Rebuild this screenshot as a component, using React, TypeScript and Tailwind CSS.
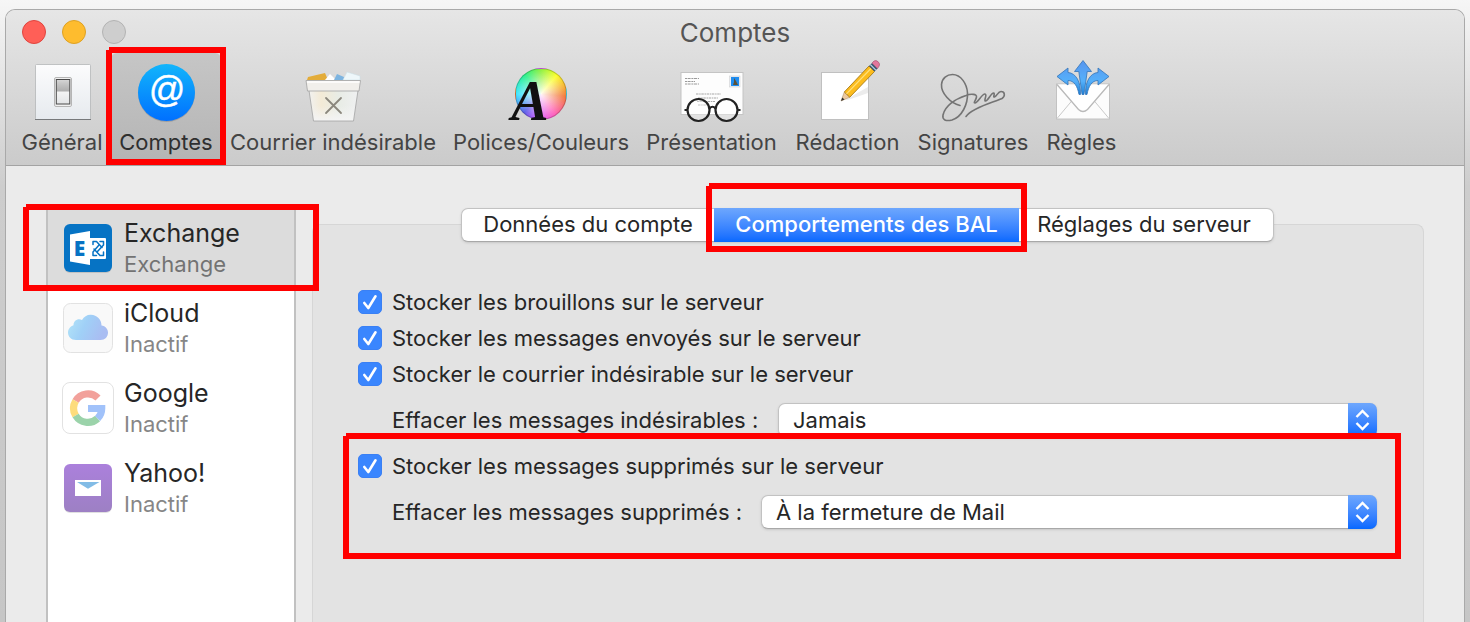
import { useState } from "react";
import type { ReactNode } from "react";

function Highlight({ className }: { className: string }) {
  return (
    <span
      aria-hidden="true"
      className={`pointer-events-none absolute z-10 border-[6px] border-[#ff0000] [clip-path:polygon(3px_0,100%_0,100%_100%,0_100%,0_3px,3px_3px)] ${className}`}
    />
  );
}

function GeneralIcon() {
  return (
    <svg viewBox="0 0 64 64" className="size-16">
      <defs>
        <linearGradient id="plate" x1="0" y1="0" x2="0" y2="1">
          <stop offset="0" stopColor="#fcfcfd" />
          <stop offset="1" stopColor="#e6eaee" />
        </linearGradient>
        <linearGradient id="rocker" x1="0" y1="0" x2="0" y2="1">
          <stop offset="0" stopColor="#d8d8d8" />
          <stop offset="0.15" stopColor="#c8c8c8" />
          <stop offset="0.48" stopColor="#adadad" />
          <stop offset="0.5" stopColor="#f4f4f4" />
          <stop offset="1" stopColor="#e2e4e6" />
        </linearGradient>
      </defs>
      <rect x="5.5" y="4.5" width="55" height="55" rx="1" fill="url(#plate)" stroke="#b4b6b8" strokeWidth="0.8" />
      <path d="M5 59.5h56" stroke="#77797b" strokeWidth="1.2" />
      <rect x="24.5" y="17.5" width="17" height="29" rx="1.5" fill="#f0f0f0" stroke="#b5b5b5" />
      <rect x="26.3" y="19.5" width="13.5" height="24.5" fill="url(#rocker)" stroke="#4a4a4a" strokeWidth="1" />
    </svg>
  );
}

function AccountsIcon() {
  return (
    <svg viewBox="0 0 64 64" className="size-16 overflow-visible">
      <defs>
        <linearGradient id="disc" x1="0" y1="0" x2="0" y2="1">
          <stop offset="0" stopColor="#12b5fb" />
          <stop offset="1" stopColor="#0070ff" />
        </linearGradient>
      </defs>
      <circle cx="32.5" cy="33.5" r="28.5" fill="#000000" opacity="0.15" />
      <circle cx="32.5" cy="32.5" r="28.5" fill="url(#disc)" />
      <text
        x="32.5"
        y="41.5"
        textAnchor="middle"
        fontFamily="Liberation Sans, sans-serif"
        fontStyle="italic"
        fontSize="36"
        fill="#ffffff"
        stroke="#ffffff"
        strokeWidth="0.4"
      >
        @
      </text>
    </svg>
  );
}

function JunkIcon() {
  return (
    <svg viewBox="0 0 64 64" className="size-16">
      <defs>
        <linearGradient id="bin" x1="0" y1="0" x2="1" y2="0">
          <stop offset="0" stopColor="#f1f1f0" />
          <stop offset="0.25" stopColor="#f3ead6" />
          <stop offset="0.6" stopColor="#e8ece5" />
          <stop offset="1" stopColor="#eff0f1" />
        </linearGradient>
        <linearGradient id="binfade" x1="0" y1="0" x2="0" y2="1">
          <stop offset="0.5" stopColor="#f4f4f4" stopOpacity="0" />
          <stop offset="1" stopColor="#f4f4f4" />
        </linearGradient>
      </defs>
      <path d="M6 20l1-3 17-4 3 7z" fill="#e3ac3a" />
      <path d="M24 20l5-6 6 6z" fill="#ffffff" />
      <path d="M33 20l3-6 7 3v3z" fill="#7db4e0" />
      <path d="M42 20l4-8 13 4v4z" fill="#eef7fa" stroke="#c9dfe6" strokeWidth="0.5" />
      <path d="M8 30.5L12.500 61h40L57 30.500z" fill="url(#bin)" />
      <path d="M8 30.5L12.500 61h40L57 30.500z" fill="url(#binfade)" stroke="#a2a2a2" strokeWidth="0.8" />
      <path d="M5 20.500h54.500l-1.500 10.500H6.500z" fill="#f1efeb" stroke="#a2a2a2" strokeWidth="0.8" />
      <path d="M6 22h52.500" stroke="#ffffff" strokeWidth="1.500" />
      <path d="M25 38l15 15M40 38L25 53" stroke="#8b877d" strokeWidth="1.800" strokeLinecap="round" />
    </svg>
  );
}

function FontsIcon() {
  return (
    <span className="relative block size-16">
      <span className="absolute top-2 left-1.5 size-[52px] rounded-full border border-black/20 bg-[radial-gradient(circle,#ffffffee_0%,#ffffff66_40%,#ffffff00_70%),conic-gradient(#8cf03c,#fbff2a_40deg,#f27a3c_95deg,#ff62b8_145deg,#dd60ff_185deg,#5f5fe8_222deg,#3fe6ff_270deg,#2df08a_320deg,#8cf03c)]" />
      <svg viewBox="0 0 64 64" className="absolute inset-0 size-16 overflow-visible">
        <text x="21" y="60" textAnchor="middle" fontFamily="Liberation Serif, serif" fontWeight="700" fontStyle="italic" fontSize="56" fill="#111111">
          A
        </text>
      </svg>
    </span>
  );
}

function ViewingIcon() {
  return (
    <svg viewBox="0 0 64 64" className="size-16">
      <rect x="1" y="12.500" width="62" height="42" fill="#fdfdfd" stroke="#c4c4c4" />
      <path d="M5 18.500h14M5 21.500h10M5 24h14" stroke="#9a9a9a" strokeWidth="1" strokeDasharray="2 .6 3 .8" />
      <path d="M16 34h25M18 38h20M17 41.500h18M18 45h9" stroke="#a8a8a8" strokeWidth="1.100" strokeDasharray="2.500 .7 1.500 .6" />
      <rect x="49.500" y="16" width="10.500" height="11" fill="#e9eef4" stroke="#cccccc" strokeWidth="0.500" />
      <rect x="51" y="17" width="8" height="9" fill="#1f8df0" />
      <path d="M54 18l2 3 2 4h-5l1-3z" fill="#5d5136" />
      <g fill="none" stroke="#222222" strokeWidth="2.200">
        <circle cx="18.500" cy="50" r="11" fill="#ffffff" fillOpacity="0.35" />
        <circle cx="46.500" cy="50" r="11" fill="#ffffff" fillOpacity="0.35" />
        <path d="M29.500 48.500q3-3.500 6 0M4.500 50h3M57.500 50h3" />
      </g>
    </svg>
  );
}

function ComposingIcon() {
  return (
    <svg viewBox="0 0 64 64" className="size-16 overflow-visible">
      <rect x="5.500" y="12.500" width="47" height="47" fill="#ffffff" stroke="#c0c0c0" />
      <path d="M29 40L52 27v6L32 40z" fill="#ececec" />
      <path d="M25 41l3.300-9 5.500 5.200z" fill="#ecc9a0" stroke="#a3855c" strokeWidth="0.500" />
      <path d="M25 41l1.300-3.600 2.200 2.100z" fill="#333333" />
      <path d="M28.300 32L53 6l5.500 5.500L33.800 37.200z" fill="#fcbc1d" stroke="#a77a16" strokeWidth="0.900" />
      <path d="M30.500 33.800L55 8.500" stroke="#ffe07a" strokeWidth="1.200" />
      <path d="M53 6l3-3 5.500 5.500-3 3z" fill="#3b5870" />
      <path d="M54.300 4.600l5.500 5.500" stroke="#b9d5e8" strokeWidth="1.200" />
      <path d="M56 3l2-2q2-1.300 4.200.8t1 4.200l-1.700 2.500z" fill="#e2779c" stroke="#a04c6c" strokeWidth="0.600" />
    </svg>
  );
}

function SignatureIcon() {
  return (
    <svg viewBox="0 0 64 64" className="size-16 overflow-visible">
      <path
        d="M19 45.500C9 43 0 33 .5 24.500C1 18 6 14.500 11.500 14.500C20 14.500 26 24 26.500 33C27 44 21 57 11 60C5 61.500 1 60 2 55C4 46 14 39 25 35.500C30 33.500 36 34 35.500 37C35 40 32 43 34 43C37 43 41 33.500 44 34C46.500 34.500 42.500 41 44.500 41C47 41 50 33 52.500 33C54.500 33 51.500 37.500 53.500 37C56 36 57 31.500 60 31.500C64 31.500 64.500 36 61 38.500C54 42 32 47 25 56.500"
        fill="none"
        stroke="#747474"
        strokeWidth="1.600"
        strokeLinecap="round"
        strokeLinejoin="round"
      />
    </svg>
  );
}

function RulesIcon() {
  return (
    <svg viewBox="0 0 64 64" className="size-16 overflow-visible">
      <defs>
        <linearGradient id="arrows" gradientUnits="userSpaceOnUse" x1="0" y1="0" x2="0" y2="35">
          <stop offset="0" stopColor="#5794ee" />
          <stop offset="0.600" stopColor="#55b0fa" />
          <stop offset="1" stopColor="#1c7fd6" />
        </linearGradient>
      </defs>
      <rect x="6.500" y="24" width="53" height="35" fill="#fcfcfc" stroke="#c2c2c2" />
      <path d="M7 58.500L22.500 40M59 58.500L43.500 40" stroke="#c9c9c9" fill="none" />
      <path d="M7 24.500L28.500 49.500q4.500 4 9 0L59 24.500" fill="#ffffff" stroke="#b9b9b9" strokeWidth="1.300" />
      <g fill="url(#arrows)" stroke="#3273b8" strokeWidth="0.800" strokeLinejoin="round">
        <path d="M33 .5l8.500 11H37.200L34 34.500h-2l-3.200-23h-4.300z" />
        <path d="M7 16.500L18 8v4.500C26 13 31 22 30.500 34.500h-1.500C27.500 26 24 20.500 18 20.500v4.500z" />
        <path d="M59 16.500L48 8v4.500C40 13 35 22 35.500 34.500h1.500C38.500 26 42 20.500 48 20.500v4.500z" />
      </g>
    </svg>
  );
}

type Tool = { label: string; icon: ReactNode; width: string; active?: boolean };

const tools: Tool[] = [
  { label: "Général", icon: <GeneralIcon />, width: "w-[98px]" },
  { label: "Comptes", icon: <AccountsIcon />, width: "w-[110px]", active: true },
  { label: "Courrier indésirable", icon: <JunkIcon />, width: "w-56" },
  { label: "Polices/Couleurs", icon: <FontsIcon />, width: "w-48" },
  { label: "Présentation", icon: <ViewingIcon />, width: "w-[149px]" },
  { label: "Rédaction", icon: <ComposingIcon />, width: "w-[123px]" },
  { label: "Signatures", icon: <SignatureIcon />, width: "w-32" },
  { label: "Règles", icon: <RulesIcon />, width: "w-[89px]" },
];

function ExchangeLogo() {
  return (
    <svg viewBox="0 0 52 52" className="size-[52px]">
      <rect x="2" y="3" width="48" height="48" rx="6" fill="#000000" opacity="0.12" />
      <rect x="2" y="2" width="48" height="48" rx="6" fill="#0673c4" />
      <rect x="27" y="16" width="17" height="21" rx="1" fill="#ffffff" />
      <g fill="none" stroke="#0673c4" strokeWidth="1.500" strokeLinecap="round" strokeLinejoin="round">
        <path d="M31 22.500v-3h3.500l5.500 6" />
        <path d="M38 19.500h3.500v3.500l-6 6.500" />
        <path d="M41.500 30v3.500H38L32 27" />
        <path d="M34.500 33.500H31V30l6-7" />
      </g>
      <path d="M8 12.500L28 9v34L8 39.500z" fill="#ffffff" />
      <text x="17.500" y="33.500" textAnchor="middle" fontFamily="Open Sans, sans-serif" fontWeight="800" fontSize="21" fill="#0673c4">
        E
      </text>
    </svg>
  );
}

function ICloudLogo() {
  return (
    <svg viewBox="0 0 52 52" className="size-[52px]">
      <defs>
        <linearGradient id="cloud" x1="0" y1="0" x2="1" y2="0.300">
          <stop offset="0" stopColor="#b4e6f8" />
          <stop offset="0.500" stopColor="#a0d0f7" />
          <stop offset="1" stopColor="#a9bdf2" />
        </linearGradient>
      </defs>
      <rect x="1.500" y="1.500" width="49" height="49" rx="7" fill="#f9f9f9" stroke="#e2e2e2" />
      <path d="M14 38C9 38 6 34.500 6 30.500C6 27 8.500 24 11.500 23.200C11.500 18.500 16 16 20 18C22 14.500 25.500 12.500 29 12.800C35 13 39.500 17.500 39.500 23.500C43.500 24 46 27 46 30.500C46 35 43 38 38.500 38z" fill="url(#cloud)" />
    </svg>
  );
}

function GoogleLogo() {
  return (
    <svg viewBox="0 0 52 52" className="size-[52px]">
      <rect x="0.500" y="0.500" width="51" height="51" rx="7.500" fill="#ffffff" stroke="#e2e2e2" />
      <g fill="none" strokeWidth="7.200">
        <path d="M36 16A14.300 14.300 0 0 0 13.600 19" stroke="#f2a19b" />
        <path d="M13.600 19a14.300 14.300 0 0 0 0 14.500" stroke="#fddc7c" />
        <path d="M13.600 33.500a14.300 14.300 0 0 0 22 3" stroke="#9bd3aa" />
        <path d="M35.600 36.500A14.300 14.300 0 0 0 39.700 26.500H26" stroke="#a1c2fa" />
      </g>
    </svg>
  );
}

function YahooLogo() {
  return (
    <svg viewBox="0 0 52 52" className="size-[52px]">
      <defs>
        <linearGradient id="violet" x1="0" y1="0" x2="0" y2="1">
          <stop offset="0" stopColor="#ab80dc" />
          <stop offset="1" stopColor="#9d80c4" />
        </linearGradient>
      </defs>
      <rect x="2" y="3" width="48" height="48" rx="6" fill="#000000" opacity="0.120" />
      <rect x="2" y="2" width="48" height="48" rx="6" fill="url(#violet)" />
      <rect x="13" y="18" width="26" height="16" fill="#ffffff" />
      <path d="M15 20h22.500L26 26.800z" fill="#82bce6" />
    </svg>
  );
}

const accounts = [
  { name: "Exchange", status: "Exchange", logo: <ExchangeLogo /> },
  { name: "iCloud", status: "Inactif", logo: <ICloudLogo /> },
  { name: "Google", status: "Inactif", logo: <GoogleLogo /> },
  { name: "Yahoo!", status: "Inactif", logo: <YahooLogo /> },
];

function CheckRow({ id, label }: { id: string; label: string }) {
  const [checked, setChecked] = useState(true);
  return (
    <div className="flex h-9 items-center gap-2.5">
      <span className="relative flex size-6">
        <input
          id={id}
          type="checkbox"
          checked={checked}
          onChange={(e) => setChecked(e.target.checked)}
          className="size-6 appearance-none rounded-[5px] border border-[#b8b8b8] bg-white checked:border-[#3a80f4] checked:bg-[#3a86fe]"
        />
        {checked && (
          <svg viewBox="0 0 24 24" className="pointer-events-none absolute inset-0 size-6">
            <path d="M6.300 13l4 5L17.500 6.300" fill="none" stroke="#ffffff" strokeWidth="2.600" strokeLinecap="round" strokeLinejoin="round" />
          </svg>
        )}
      </span>
      <label htmlFor={id}>{label}</label>
    </div>
  );
}

function SelectRow({ id, label, options, labelWidth }: { id: string; label: string; options: string[]; labelWidth: string }) {
  return (
    <div className="flex h-14 items-center pl-[34px]">
      <label htmlFor={id} className={`shrink-0 whitespace-nowrap ${labelWidth}`}>
        {label}
      </label>
      <span className="relative flex flex-1">
        <select
          id={id}
          className="h-[34px] w-full appearance-none rounded-[7px] border border-[#c2c2c2] border-b-[#a8a8a8] bg-white pl-3.5 text-[#262626] shadow-sm"
        >
          {options.map((o) => (
            <option key={o}>{o}</option>
          ))}
        </select>
        <span className="pointer-events-none absolute inset-y-0 right-0 w-[29px] rounded-r-[7px] bg-linear-to-b from-[#6ea7fd] to-[#0468ff]">
          <svg viewBox="0 0 29 34" className="h-[34px] w-[29px]">
            <path d="M8.500 14l6-6 6 6M8.500 20l6 6 6-6" fill="none" stroke="#ffffff" strokeWidth="2.400" />
          </svg>
        </span>
      </span>
    </div>
  );
}

export default function App() {
  return (
    <div className="flex min-h-screen flex-col bg-linear-to-b from-[#f6f6f6] via-[#cdcdcd] via-30% to-[#c6c6c6] pt-[9px] pr-[5px] pl-[5px] font-['Inter',sans-serif] text-[22px] leading-7 text-[#262626]">
      <div className="flex flex-1 flex-col overflow-hidden rounded-t-[10px] border border-b-0 border-[#a9a9a9] bg-[#ebebeb]">
        <header className="border-b border-[#a3a3a3] bg-linear-to-b from-[#e6e6e6] to-[#cbcbcb]">
          <div className="relative flex h-[43px] items-center justify-center">
            <div className="absolute inset-y-0 left-4 flex items-center gap-4">
              <button aria-label="Fermer" className="size-6 rounded-full border border-[#e0443e] bg-[#ff5f57]" />
              <button aria-label="Réduire" className="size-6 rounded-full border border-[#dea123] bg-[#febc2e]" />
              <button aria-label="Agrandir" className="size-6 rounded-full border border-[#b3b3b3] bg-[#cecece]" />
            </div>
            <h1 className="pt-0.5 text-[26px] leading-8 font-normal text-[#555555]">Comptes</h1>
          </div>
          <nav className="flex h-28 pl-[7px]">
            {tools.map((t) => (
              <div key={t.label} className={`relative flex shrink-0 ${t.width}`}>
                <button
                  className={`flex w-full flex-col items-center pt-[7px] whitespace-nowrap ${
                    t.active ? "rounded-t-md bg-linear-to-b from-[#c6c6c6] to-[#b4b4b4] text-[#2f2f2f]" : "text-[#444444]"
                  }`}
                >
                  {t.icon}
                  <span className="mt-1">{t.label}</span>
                </button>
                {t.active && <Highlight className="-inset-x-[5px] -top-1.5 bottom-0" />}
              </div>
            ))}
          </nav>
        </header>

        <main className="flex flex-1 pr-10 pl-10">
          <aside className="relative mt-[42px] w-[250px] shrink-0 border-x-2 border-[#c1c1c1] bg-white">
            <ul>
              {accounts.map((a, i) => (
                <li key={a.name}>
                  <button className={`flex h-20 w-full items-center gap-2.5 pl-3.5 text-left ${i === 0 ? "bg-[#dcdcdc]" : ""}`}>
                    {a.logo}
                    <span className="flex flex-col">
                      <span className="text-[25px] leading-8">{a.name}</span>
                      <span className={`leading-[30px] ${i === 0 ? "text-[#737373]" : "text-[#868686]"}`}>{a.status}</span>
                    </span>
                  </button>
                </li>
              ))}
            </ul>
            <Highlight className="-top-1 -right-[25px] -left-[25px] h-[87px]" />
          </aside>

          <section className="mt-[58px] ml-4 flex-1 rounded-t-lg border border-b-0 border-[#d6d6d6] bg-[#e3e3e3] pr-[46px] pl-[45px]">
            <div className="-mt-[17px] flex justify-center">
              <div role="tablist" className="flex h-[34px] rounded-[7px] border border-[#c2c2c2] border-b-[#a8a8a8] bg-white shadow-sm">
                <button role="tab" aria-selected="false" className="w-[252px] pb-0.5 whitespace-nowrap">
                  Données du compte
                </button>
                <div className="relative -my-px flex">
                  <button role="tab" aria-selected="true" className="w-[305px] bg-linear-to-b from-[#6ea7fd] to-[#0468ff] pb-0.5 font-medium whitespace-nowrap text-white">
                    Comportements des BAL
                  </button>
                  <Highlight className="-top-[25px] -right-2 -bottom-2.5 -left-2" />
                </div>
                <button role="tab" aria-selected="false" className="w-[254px] pr-1 pb-0.5 whitespace-nowrap">
                  Réglages du serveur
                </button>
              </div>
            </div>

            <form className="pt-[42px]">
              <CheckRow id="drafts" label="Stocker les brouillons sur le serveur" />
              <CheckRow id="sent" label="Stocker les messages envoyés sur le serveur" />
              <CheckRow id="junk" label="Stocker le courrier indésirable sur le serveur" />
              <SelectRow
                id="erase-junk"
                label="Effacer les messages indésirables :"
                labelWidth="w-[386px]"
                options={["Jamais", "Après un jour", "Après une semaine", "Après un mois", "À la fermeture de Mail"]}
              />
              <div className="relative">
                <CheckRow id="deleted" label="Stocker les messages supprimés sur le serveur" />
                <SelectRow
                  id="erase-deleted"
                  label="Effacer les messages supprimés :"
                  labelWidth="w-[369px]"
                  options={["À la fermeture de Mail", "Jamais", "Après un jour", "Après une semaine", "Après un mois"]}
                />
                <Highlight className="-top-[15px] -right-6 -left-[15px] h-[126px]" />
              </div>
            </form>
          </section>
        </main>
      </div>
    </div>
  );
}
